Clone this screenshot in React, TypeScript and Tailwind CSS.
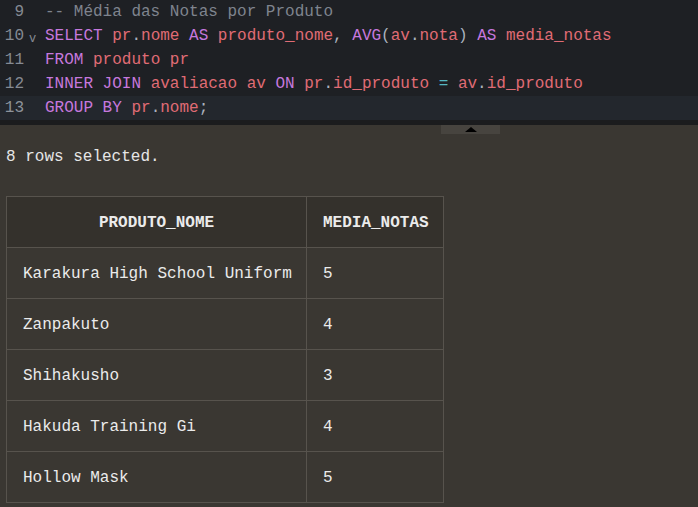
import React from 'react'

type Tok = { t: string; c: string }

const K = 'text-[#c678dd]'
const I = 'text-[#e06c75]'
const P = 'text-[#abb2bf]'
const O = 'text-[#56b6c2]'
const C = 'text-[#7f848e]'

const lines: { n: number; toks: Tok[]; fold?: boolean; active?: boolean }[] = [
  { n: 9, toks: [{ t: '-- Média das Notas por Produto', c: C }] },
  {
    n: 10,
    fold: true,
    toks: [
      { t: 'SELECT ', c: K },
      { t: 'pr', c: I },
      { t: '.', c: P },
      { t: 'nome ', c: I },
      { t: 'AS ', c: K },
      { t: 'produto_nome', c: I },
      { t: ', ', c: P },
      { t: 'AVG', c: K },
      { t: '(', c: P },
      { t: 'av', c: I },
      { t: '.', c: P },
      { t: 'nota', c: I },
      { t: ') ', c: P },
      { t: 'AS ', c: K },
      { t: 'media_notas', c: I },
    ],
  },
  {
    n: 11,
    toks: [
      { t: 'FROM ', c: K },
      { t: 'produto pr', c: I },
    ],
  },
  {
    n: 12,
    toks: [
      { t: 'INNER JOIN ', c: K },
      { t: 'avaliacao av ', c: I },
      { t: 'ON ', c: K },
      { t: 'pr', c: I },
      { t: '.', c: P },
      { t: 'id_produto ', c: I },
      { t: '= ', c: O },
      { t: 'av', c: I },
      { t: '.', c: P },
      { t: 'id_produto', c: I },
    ],
  },
  {
    n: 13,
    active: true,
    toks: [
      { t: 'GROUP BY ', c: K },
      { t: 'pr', c: I },
      { t: '.', c: P },
      { t: 'nome', c: I },
      { t: ';', c: P },
    ],
  },
]

const rows = [
  ['Karakura High School Uniform', '5'],
  ['Zanpakuto', '4'],
  ['Shihakusho', '3'],
  ['Hakuda Training Gi', '4'],
  ['Hollow Mask', '5'],
]

export default function App() {
  return (
    <div className="w-[698px] h-[507px] overflow-hidden bg-[#3a3732] font-['Liberation_Mono',monospace] text-[16px]">
      {/* editor */}
      <div className="h-[120px] bg-[#1e2024]">
        {lines.map((l) => (
          <div
            key={l.n}
            className={`flex h-[24px] items-center leading-[24px] ${l.active ? 'bg-[#23272d]' : ''}`}
          >
            <div className={`w-[24px] shrink-0 text-right ${l.active ? 'text-[#8d939c]' : 'text-[#858a93]'}`}>{l.n}</div>
            <div className="w-[21px] shrink-0 pl-[5px] text-[12px] leading-[24px] text-[#858a93] pt-[5px]">
              {l.fold ? 'v' : ''}
            </div>
            <div className="whitespace-pre">
              {l.toks.map((tk, i) => (
                <span key={i} className={tk.c}>
                  {tk.t}
                </span>
              ))}
            </div>
          </div>
        ))}
      </div>
      <div className="h-[5px] bg-[#1b1c1e]" />
      {/* splitter */}
      <div className="h-[9px] bg-[#3a3732] pl-[441px]">
        <div className="w-[59px] h-[9px] bg-[#47443f] flex items-center justify-center">
          <div className="w-0 h-0 border-l-[6px] border-r-[6px] border-b-[5px] border-l-transparent border-r-transparent border-b-black" />
        </div>
      </div>
      {/* output */}
      <div className="px-[6px] pt-[11px]">
        <div className="text-[#e6e6e6] leading-[24px]">8 rows selected.</div>
        <table className="mt-[27px] w-[437px] table-fixed border-collapse text-[#ebebeb]">
          <colgroup>
            <col className="w-[300px]" />
            <col className="w-[137px]" />
          </colgroup>
          <thead>
            <tr className="bg-[#34312c]">
              <th className="h-[51px] border border-[#57534d] px-[16px] pt-[2px] text-center font-bold">PRODUTO_NOME</th>
              <th className="h-[51px] border border-[#57534d] px-[16px] pt-[2px] text-center font-bold">MEDIA_NOTAS</th>
            </tr>
          </thead>
          <tbody>
            {rows.map((r) => (
              <tr key={r[0]}>
                <td className="h-[51px] border border-[#57534d] px-[16px] pt-[2px] whitespace-pre">{r[0]}</td>
                <td className="h-[51px] border border-[#57534d] px-[16px] pt-[2px]">{r[1]}</td>
              </tr>
            ))}
          </tbody>
        </table>
      </div>
    </div>
  )
}
